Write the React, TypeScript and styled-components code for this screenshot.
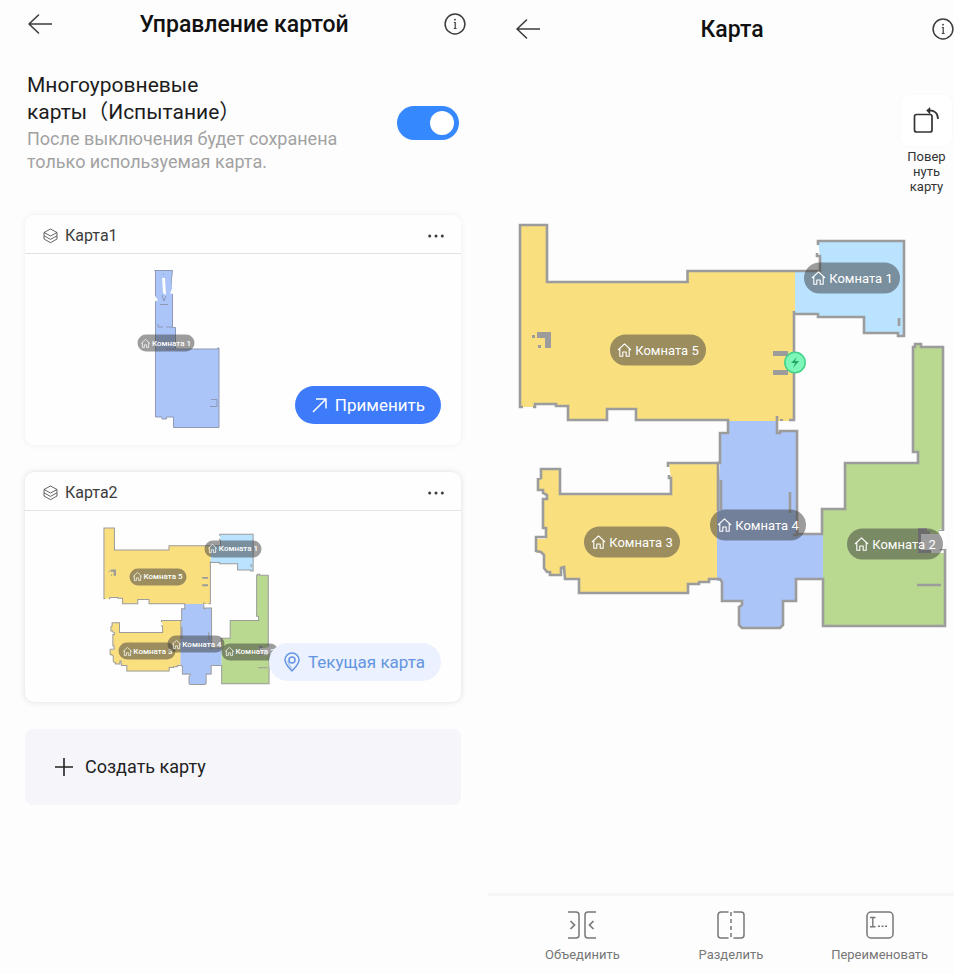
import React, { useState } from "react";
import styled, { createGlobalStyle } from "styled-components";

const GlobalStyle = createGlobalStyle`
  *, *::before, *::after { box-sizing: border-box; }
  body {
    margin: 0;
    background: #fdfdfd;
    color: #1c1c1c;
    font-family: Roboto, "Noto Sans CJK SC", sans-serif;
  }
  button {
    border: 0;
    padding: 0;
    background: none;
    color: inherit;
    font: inherit;
    cursor: pointer;
  }
  svg { display: block; }
`;

const Page = styled.div`
  display: grid;
  grid-template-columns: minmax(0, 488fr) minmax(0, 466fr);
  min-height: 100vh;
`;

const Screen = styled.main`
  display: flex;
  flex-direction: column;
  min-width: 0;
`;

const Header = styled.header<{ $side: "left" | "right" }>`
  display: flex;
  align-items: center;
  height: ${(p) => (p.$side === "left" ? 48 : 58)}px;
  padding: ${(p) => (p.$side === "left" ? "0 22px 0 28px" : "0 0 0 28px")};
`;

const Title = styled.h1`
  flex: 1;
  margin: 0;
  padding-top: 2px;
  font-size: 23px;
  line-height: 28px;
  font-weight: 500;
  text-align: center;
  color: #111;
`;

const IconButton = styled.button<{ $width: number }>`
  display: flex;
  justify-content: flex-end;
  width: ${(p) => p.$width}px;
  color: #3c3c3c;
`;

const Setting = styled.section`
  display: flex;
  align-items: center;
  justify-content: space-between;
  padding: 24px 29px 0 27px;
`;

const SettingLabel = styled.label`
  display: block;
  max-width: 225px;
  font-size: 21px;
  line-height: 27px;
`;

const SettingHint = styled.p`
  max-width: 320px;
  margin: 1px 0 0;
  font-size: 18px;
  line-height: 23px;
  color: #a2a2a2;
`;

const Toggle = styled.input`
  appearance: none;
  flex: none;
  display: flex;
  align-items: center;
  width: 62px;
  height: 34px;
  margin: 0;
  padding: 0 5px;
  border-radius: 17px;
  background: #d5d5d5;
  cursor: pointer;
  &::before {
    content: "";
    width: 24px;
    height: 24px;
    border-radius: 50%;
    background: #fff;
  }
  &:checked {
    justify-content: flex-end;
    background: #3588fd;
  }
`;

const CardList = styled.div`
  display: flex;
  flex-direction: column;
  gap: 27px;
  padding: 42px 27px 0 25px;
`;

const Card = styled.article<{ $current?: boolean }>`
  border-radius: 9px;
  background: #fefefe;
  box-shadow: 0 0 ${(p) => (p.$current ? "6px rgba(0,0,0,.13)" : "7px rgba(0,0,0,.06)")};
`;

const CardHeader = styled.header`
  display: flex;
  align-items: center;
  gap: 7px;
  height: 39px;
  padding: 3px 17px 0 18px;
  border-bottom: 1px solid #e2e2e2;
  color: #3c3c3c;
`;

const CardTitle = styled.h2`
  flex: 1;
  margin: 0;
  font-size: 16px;
  line-height: 20px;
  font-weight: 400;
`;

const CardBody = styled.div<{ $indent: number }>`
  position: relative;
  height: 191px;
  padding: 15px 0 0 ${(p) => p.$indent}px;
`;

const CardAction = styled.button<{ $current?: boolean }>`
  position: absolute;
  right: 20px;
  bottom: 21px;
  display: flex;
  align-items: center;
  gap: 6px;
  height: 38px;
  padding: 0 16px 0 ${(p) => (p.$current ? 13 : 15)}px;
  border-radius: 19px;
  background: ${(p) => (p.$current ? "#ebf1fe" : "#3d7bfb")};
  color: ${(p) => (p.$current ? "#6495e0" : "#fff")};
  font-size: 17px;
  line-height: 22px;
`;

const CreateButton = styled.button`
  display: flex;
  align-items: center;
  gap: 10px;
  height: 76px;
  padding: 0 28px;
  border-radius: 8px;
  background: #f5f5fa;
  font-size: 18px;
  line-height: 22px;
  color: #222;
`;

const RotateButton = styled.button`
  align-self: flex-end;
  display: flex;
  flex-direction: column;
  align-items: center;
  width: 51px;
  margin: 37px 2px 0 0;
  font-size: 13px;
  line-height: 15px;
  color: #333;
`;

const RotateTile = styled.span`
  display: flex;
  justify-content: center;
  align-items: center;
  width: 51px;
  height: 51px;
  margin-bottom: 3px;
  border-radius: 8px;
  background: #fff;
  box-shadow: 0 0 3px rgba(0, 0, 0, 0.03);
`;

const MapArea = styled.section`
  flex: 1;
  padding: 26px 4px 20px 27px;
`;

const Toolbar = styled.nav`
  display: grid;
  grid-template-columns: repeat(3, 1fr);
  height: 81px;
  padding: 15px 0 0 20px;
  border-top: 3px solid #f6f6f6;
`;

const ToolButton = styled.button`
  display: flex;
  flex-direction: column;
  align-items: center;
  gap: 7px;
  font-size: 13px;
  line-height: 17px;
  color: #777;
`;

const Plan = styled.div<{ $width?: number }>`
  position: relative;
  width: ${(p) => (p.$width ? `${p.$width}px` : "100%")};
  svg { width: 100%; }
`;

const RoomTag = styled.span<{ $small?: boolean }>`
  position: absolute;
  display: flex;
  align-items: center;
  justify-content: center;
  gap: ${(p) => (p.$small ? 1 : 3)}px;
  width: ${(p) => (p.$small ? 57 : 96)}px;
  height: ${(p) => (p.$small ? 17 : 31)}px;
  border-radius: 16px;
  transform: translate(-50%, -50%);
  background: rgba(60, 60, 60, 0.5);
  color: #fff;
  font-size: ${(p) => (p.$small ? 8 : 13)}px;
  line-height: ${(p) => (p.$small ? 10 : 16)}px;
  font-weight: ${(p) => (p.$small ? 500 : 400)};
  white-space: nowrap;
  && svg { flex: none; width: ${(p) => (p.$small ? 10 : 15)}px; }
`;

const BackIcon = () => (
  <svg width="24" height="20" viewBox="0 0 24 20" fill="none" stroke="currentColor" strokeWidth="1.6" strokeLinecap="round" strokeLinejoin="round">
    <path d="M24 10H1M10.5 1 1 10l9.500 9" />
  </svg>
);

const InfoIcon = () => (
  <svg width="22" height="22" viewBox="0 0 22 22" fill="none" stroke="currentColor" strokeWidth="1.500">
    <circle cx="11" cy="11" r="9.900" />
    <path d="M9.800 9.500h1.400V15.500M9.800 15.500h2.800" strokeWidth="1.200" />
    <circle cx="11" cy="6.700" r="0.900" fill="currentColor" stroke="none" />
  </svg>
);

const LayersIcon = () => (
  <svg width="15" height="16" viewBox="0 0 15 16" fill="none" stroke="currentColor" strokeWidth="0.800" strokeLinejoin="round">
    <path d="M7.500 1 14 4.500 7.500 8 1 4.500ZM1 4.500v3.300l6.500 3.600L14 7.800V4.500M1 7.800V11l6.500 3.700L14 11V7.800" />
  </svg>
);

const DotsIcon = () => (
  <svg width="16" height="4" viewBox="0 0 16 4" fill="currentColor">
    <circle cx="1.700" cy="2" r="1.500" />
    <circle cx="8" cy="2" r="1.500" />
    <circle cx="14.300" cy="2" r="1.500" />
  </svg>
);

const ApplyIcon = () => (
  <svg width="19" height="18" viewBox="0 0 19 18" fill="none" stroke="currentColor" strokeWidth="1.500">
    <path d="M3 16 16 3M6 3h10v9.500" />
  </svg>
);

const PinIcon = () => (
  <svg width="20" height="20" viewBox="0 0 20 20" fill="none" stroke="currentColor" strokeWidth="1.500" strokeLinejoin="round">
    <path d="M10 19C7 16 3 12 3 8a7 7 0 0 1 14 0c0 4-4 8-7 11Z" />
    <path d="M10 16.500C8 14 5.800 11 5.800 8.500" strokeWidth="0.700" />
    <circle cx="10" cy="8" r="3" />
  </svg>
);

const PlusIcon = () => (
  <svg width="22" height="22" viewBox="0 0 22 22" fill="none" stroke="currentColor" strokeWidth="1.600">
    <path d="M2 11h18M11 2v18" />
  </svg>
);

const RotateIcon = () => (
  <svg width="27" height="27" viewBox="0 0 27 27" fill="none" stroke="#333" strokeWidth="1.700">
    <rect x="1.500" y="7.500" width="17.500" height="17.500" rx="2" />
    <path d="M15 3.500c6.500-.5 10 2.500 10 8.500" />
    <path d="M17 .5 13.500 3.500 17 7Z" fill="#333" strokeWidth="0.500" />
  </svg>
);

const MergeIcon = () => (
  <svg width="28" height="28" viewBox="0 0 28 28" fill="none" stroke="currentColor" strokeWidth="1.500">
    <path d="M0 1h8a3 3 0 0 1 3 3v20a3 3 0 0 1-3 3H0M28 1h-8a3 3 0 0 0-3 3v20a3 3 0 0 0 3 3h8" />
    <path d="m2.500 10 4 4-4 4M25.500 10l-4 4 4 4" strokeWidth="1.700" />
  </svg>
);

const SplitIcon = () => (
  <svg width="28" height="28" viewBox="0 0 28 28" fill="none" stroke="currentColor" strokeWidth="1.500">
    <path d="M11.500 1H4a3 3 0 0 0-3 3v20a3 3 0 0 0 3 3h7.500M16.500 1H24a3 3 0 0 1 3 3v20a3 3 0 0 1-3 3h-7.500" />
    <path d="M14 1v26" strokeDasharray="4 3" />
  </svg>
);

const RenameIcon = () => (
  <svg width="28" height="28" viewBox="0 0 28 28" fill="none" stroke="currentColor" strokeWidth="1.500">
    <rect x="1" y="1" width="26" height="26" rx="4" />
    <path d="M4 6.500h5.500M6.800 6.500v9.300M4 15.800h5.500M12 15.300h2M15.500 15.300h2M19 15.300h2" strokeWidth="1.400" />
  </svg>
);

const HomeIcon = () => (
  <svg viewBox="0 0 15 15" fill="none" stroke="currentColor" strokeWidth="1.100" strokeLinejoin="round">
    <path d="M1 7.500 7.500 1.300 14 7.500M2.800 6v7.700h3V9.500h3.400v4.200h3V6" />
  </svg>
);

interface Room {
  name: string;
  x: number;
  y: number;
}

const homeRooms: Room[] = [
  { name: "Комната 5", x: 658, y: 350 },
  { name: "Комната 1", x: 852, y: 278 },
  { name: "Комната 3", x: 632, y: 542 },
  { name: "Комната 4", x: 758, y: 525 },
  { name: "Комната 2", x: 895, y: 544 },
];

const RoomTags = ({ rooms, box, small }: { rooms: Room[]; box: number[]; small?: boolean }) => (
  <>
    {rooms.map((r) => (
      <RoomTag
        key={r.name}
        $small={small}
        style={{ left: `${((r.x - box[0]) / box[2]) * 100}%`, top: `${((r.y - box[1]) / box[3]) * 100}%` }}
      >
        <HomeIcon />
        {r.name}
      </RoomTag>
    ))}
  </>
);

const homeBox = [515, 220, 435, 412];

const HomePlan = ({ small }: { small?: boolean }) => (
  <Plan $width={small ? 169 : undefined}>
    <svg viewBox={homeBox.join(" ")} role="img" aria-label="План квартиры">
      <path fill="#fadf7f" d="M520 225h27v57h140v-11h108v44l-1 106h-66-92v-12h-29v11h-39v-14h-12v-2h-22v3h-14Z" />
      <path fill="#b9e3ff" d="M795 271h25v-15l-2-15h86v95h-6v-3h-34v-16h-46v-3h-23Z" />
      <path fill="#fadf7f" d="M669 463h49v117h-9v3h-10v2h-11v9H579v-14h-14v-11l-4-2-1 8h-11v-3h-3l-2-3v-14l-3-2h-5v-14h10v-9l-3-2v-28l4-1v-4l-4-4-5-1v-11l3-1v-9h19v25h111v-16Z" />
      <path fill="#abc5f9" d="M728 421h49v12l2-2h18v103h26v46h-27v22h-13v24l-3 3h-38l-3-3v-18l3-2v-4h-20v-19l-2-2h-3v-71l3-46v-31h8Z" />
      <path fill="#b8d98f" d="M823 509h22v-46h73v-11h-5V347l2-3h6v3h22v182h-25v24h27v74H823Z" />
      <g fill="none" stroke="#9c9c9c" strokeWidth="2.600">
        <path d="M523 407h-3V225h27v57h140.500v-11H820v-15h-3v-3" />
        <path d="M818 245v-4h86v95h-6v-3h-34v-16h-46v-3h-24v-3M794 311v109h-5" />
        <path d="M533 407h2v-3h21v2h12v14h39v-11h29v11h92v13h-8v30h-2v48M721 480v30" />
        <path d="M777 416v17h3v-2h17v103h25v-25h23v-46h73v-11h-5V347h2v-3h6v3h22v184h-4" />
        <path d="M668 467v-4h52M669 475v3h2v16H560v-25h-19v9l-3 1v11h5v3l4 2v4h-4v29h3v9h-10v14l5 1 3 3v13l3 4h3v3h11v-7l3-1 1 12h14v14h109v-9h11v-2h10v-3h11l2 3v19h20v4l-3 2v18l3 3h38l3-3v-24h13v-22h27v47h122v-77h-5" />
        <path d="M790 492v21M899 318v8M917 585h24M797 527v8h-4" />
      </g>
      <path fill="#fff" d="M918 532h12v2h9v-3h7v18h-15v3h-13Z" />
      <path fill="#b8d98f" d="M927 529h12v5h-9v-3h-3Z" />
      <path fill="#9c9c9c" d="M918 528h9v3h3v3h-9v19h-3ZM918 550h13v3h-13ZM537 332h14v16h-6v-10h-8ZM532 335h3v3h-3ZM538 345h3v3h-3ZM773 351h15v5h-15ZM773 370h15v5h-15ZM780 419h3v2h-3Z" />
      {!small && (
        <>
          <circle cx="795" cy="362.500" r="10.200" fill="#7df7b7" stroke="#43d18a" strokeWidth="1.500" />
          <path d="m797 357-6 6h4l-2 5 6-7h-4Z" fill="#24a866" />
        </>
      )}
    </svg>
    <RoomTags rooms={homeRooms} box={homeBox} small={small} />
  </Plan>
);

const flatBox = [137, 270, 84, 160];

const FlatPlan = () => (
  <Plan $width={84}>
    <svg viewBox={flatBox.join(" ")} role="img" aria-label="План этажа">
      <path
        fill="#abc5f9"
        stroke="#8f99b3"
        d="M154.500 271.500h18l-1 8 1 9v40h3v21.500h42v-1h1.500v79.500h-45.500v-10.500h-7v2h-4.500v-2h-6.500V272Z"
      />
      <path fill="#fdfdfd" d="M162 279h3l1 17-3-2ZM172 278h3v18l-5-2 2-4ZM153 294l5 7-4 2Z" />
      <path fill="none" stroke="#8f99b3" d="M163 275h1M162 296l2 6 2-5M160 305.500h8M158 325v3h5M166 328h7M211 400.500h6v7h-7M165.500 350h10" />
    </svg>
    <RoomTags rooms={[{ name: "Комната 1", x: 166, y: 344 }]} box={flatBox} small />
  </Plan>
);

export default function App() {
  const [multi, setMulti] = useState(true);
  return (
    <>
      <GlobalStyle />
      <Page>
        <Screen>
          <Header $side="left">
            <IconButton $width={24} aria-label="Назад"><BackIcon /></IconButton>
            <Title>Управление картой</Title>
            <IconButton $width={30} aria-label="Информация"><InfoIcon /></IconButton>
          </Header>
          <Setting>
            <div>
              <SettingLabel htmlFor="multi">Многоуровневые карты（Испытание）</SettingLabel>
              <SettingHint id="multi-hint">После выключения будет сохранена только используемая карта.</SettingHint>
            </div>
            <Toggle
              id="multi"
              type="checkbox"
              role="switch"
              aria-describedby="multi-hint"
              checked={multi}
              onChange={(e) => setMulti(e.target.checked)}
            />
          </Setting>
          <CardList>
            <Card>
              <CardHeader>
                <LayersIcon />
                <CardTitle>Карта1</CardTitle>
                <IconButton $width={16} aria-label="Меню Карта1"><DotsIcon /></IconButton>
              </CardHeader>
              <CardBody $indent={112}>
                <FlatPlan />
                <CardAction><ApplyIcon />Применить</CardAction>
              </CardBody>
            </Card>
            <Card $current>
              <CardHeader>
                <LayersIcon />
                <CardTitle>Карта2</CardTitle>
                <IconButton $width={16} aria-label="Меню Карта2"><DotsIcon /></IconButton>
              </CardHeader>
              <CardBody $indent={77}>
                <HomePlan small />
                <CardAction $current><PinIcon />Текущая карта</CardAction>
              </CardBody>
            </Card>
            <CreateButton><PlusIcon />Создать карту</CreateButton>
          </CardList>
        </Screen>
        <Screen>
          <Header $side="right">
            <IconButton $width={24} aria-label="Назад"><BackIcon /></IconButton>
            <Title>Карта</Title>
            <IconButton $width={30} aria-label="Информация"><InfoIcon /></IconButton>
          </Header>
          <RotateButton>
            <RotateTile><RotateIcon /></RotateTile>
            <span>Повер<br />нуть<br />карту</span>
          </RotateButton>
          <MapArea>
            <HomePlan />
          </MapArea>
          <Toolbar>
            <ToolButton><MergeIcon />Объединить</ToolButton>
            <ToolButton><SplitIcon />Разделить</ToolButton>
            <ToolButton><RenameIcon />Переименовать</ToolButton>
          </Toolbar>
        </Screen>
      </Page>
    </>
  );
}
